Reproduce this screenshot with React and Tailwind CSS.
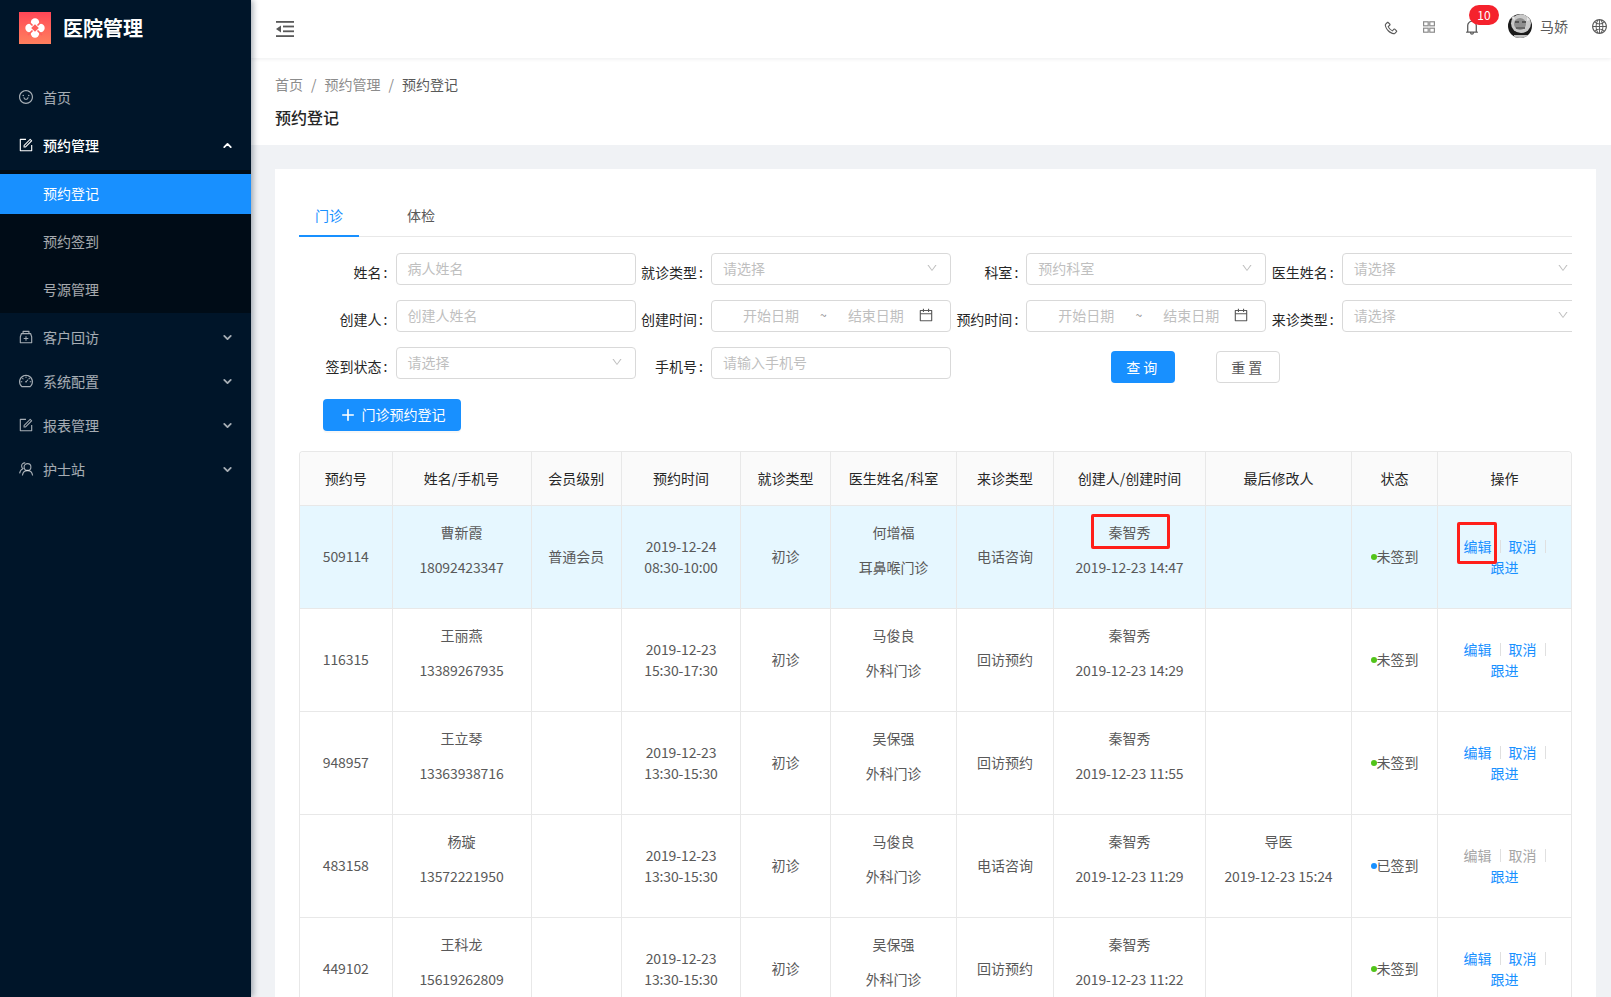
import React from "react";
import {
  AiOutlineSmile, AiOutlineForm, AiOutlineMedicineBox, AiOutlineDashboard,
  AiOutlinePhone, AiOutlineBell, AiOutlineGlobal, AiOutlineCalendar, AiOutlineDown,
} from "react-icons/ai";
import { ChevronDown, ChevronUp, Plus } from "lucide-react";

function Logo() {
  return (
    <div className="w-8 h-8 bg-gradient-to-b from-[#ff4557] to-[#ff7f5e] flex items-center justify-center shrink-0">
      <svg width="24" height="24" viewBox="0 0 24 24">
        <circle cx="12" cy="6.5" r="4.2" fill="#fff" />
        <circle cx="12" cy="17.5" r="4.2" fill="#fff" />
        <circle cx="6.5" cy="12" r="4.2" fill="#fff" />
        <circle cx="17.5" cy="12" r="4.2" fill="#fff" />
        <path d="M12 8.2 L15.8 12 L12 15.8 L8.2 12 Z" fill="#ff5f5b" />
        <path d="M5 5 L9.5 9.5 M19 5 L14.5 9.5 M5 19 L9.5 14.5 M19 19 L14.5 14.5" stroke="#ff5f5b" strokeWidth="1.6" />
      </svg>
    </div>
  );
}

const NurseIcon = ({ className }) => (
  <svg className={className} viewBox="0 0 16 16" fill="none" stroke="currentColor" strokeWidth="1.1">
    <circle cx="9.5" cy="6" r="3.4" />
    <path d="M4.4 14.5 C4.8 11.4 6.8 9.6 9.5 9.6 C12.2 9.6 14.2 11.4 14.6 14.5" />
    <path d="M7.2 1.9 C5.2 1.6 3.6 3 3.6 5 C3.6 6.2 4.1 7 4.9 7.7 C3 8.5 1.9 10.2 1.6 12.4" />
  </svg>
);

const MenuItem = ({ icon: Icon, label, open, active }) => (
  <div className={`h-11 flex items-center pl-[18px] pr-[17px] ${active ? "text-white" : "text-white/65"}`}>
    <Icon className="w-4 h-4 mr-[9px] shrink-0" />
    <span className={`text-[14px] flex-1 ${active ? "font-medium" : ""}`}>{label}</span>
    {open === true && <ChevronUp className="w-[13px] h-[13px] text-white" strokeWidth={3.4} />}
    {open === false && <ChevronDown className="w-[13px] h-[13px]" strokeWidth={3.4} />}
  </div>
);

function Sidebar() {
  return (
    <aside className="w-[251px] shrink-0 h-full bg-[#001529] shadow-[2px_0_6px_rgba(0,21,41,0.35)] z-10">
      <div className="h-[56px] flex items-center pl-[19px] gap-[12px]">
        <Logo />
        <span className="text-white text-[20px] font-bold">医院管理</span>
      </div>
      <div className="pt-[17px]">
        <div className="h-12 flex items-center"><div className="w-full"><MenuItem icon={AiOutlineSmile} label="首页" /></div></div>
        <div className="h-12 flex items-center"><div className="w-full"><MenuItem icon={AiOutlineForm} label="预约管理" open={true} active /></div></div>
        <div className="bg-[#000c17] pt-1 h-[143px] mt-px">
          <div className="h-10 bg-[#1890ff] text-white text-[14px] flex items-center pl-[43px] pb-[2px]">预约登记</div>
          <div className="h-12 text-white/65 text-[14px] flex items-center pl-[43px] mt-1 pb-[2px]">预约签到</div>
          <div className="h-12 text-white/65 text-[14px] flex items-center pl-[43px] pb-[2px]">号源管理</div>
        </div>
        <div className="pt-[2px]">
          <MenuItem icon={AiOutlineMedicineBox} label="客户回访" open={false} />
          <MenuItem icon={AiOutlineDashboard} label="系统配置" open={false} />
          <MenuItem icon={AiOutlineForm} label="报表管理" open={false} />
          <MenuItem icon={NurseIcon} label="护士站" open={false} />
        </div>
      </div>
    </aside>
  );
}

function Avatar() {
  return (
    <svg className="w-6 h-6" viewBox="0 0 24 24">
      <defs>
        <clipPath id="av"><circle cx="12" cy="12" r="12" /></clipPath>
      </defs>
      <g clipPath="url(#av)">
        <rect width="24" height="24" fill="#1a1a1a" />
        <ellipse cx="13" cy="9.5" rx="10" ry="9.5" fill="#c9c9c9" />
        <ellipse cx="12" cy="10" rx="6" ry="6" fill="#8e8e8e" />
        <path d="M7 7 H11 V9 H7 Z M14 7 H18 V9 H14 Z" fill="#555" />
        <path d="M8 13 H17 V15 H8 Z" fill="#666" />
        <path d="M3 4 L6 2 L7 6 Z M19 3 L22 6 L19 7 Z" fill="#e6e6e6" />
        <rect x="6" y="21" width="13" height="3" fill="#bdbdbd" />
      </g>
    </svg>
  );
}

const FoldIcon = () => (
  <svg width="18" height="16" viewBox="0 0 18 16" fill="#595959">
    <rect x="0" y="0" width="18" height="1.8" />
    <rect x="7" y="4.6" width="11" height="1.8" />
    <rect x="7" y="9.4" width="11" height="1.8" />
    <rect x="0" y="14.2" width="18" height="1.8" />
    <path d="M5 4.5 V11.5 L0 8 Z" />
  </svg>
);

const GridIcon = () => (
  <svg width="12" height="12" viewBox="0 0 12 12" fill="none" stroke="#8c8c8c" strokeWidth="1.2">
    <rect x="0.6" y="0.8" width="4.6" height="4" />
    <rect x="6.8" y="0.8" width="4.6" height="4" />
    <rect x="0.6" y="7.2" width="4.6" height="4" />
    <rect x="6.8" y="7.2" width="4.6" height="4" />
  </svg>
);

function Header() {
  return (
    <header className="h-[58px] shrink-0 bg-white shadow-[0_1px_4px_rgba(0,21,41,0.08)] flex items-center relative z-[5] pl-[25px]">
      <FoldIcon />
      <div className="ml-auto flex items-center text-[#595959] mt-[-6px]">
        <AiOutlinePhone className="w-[16px] h-[16px] mt-[4px] -scale-x-100" />
        <span className="ml-[24px] mt-[2px] flex"><GridIcon /></span>
        <div className="relative ml-[28px] mt-[2px]">
          <AiOutlineBell className="w-[18px] h-[18px]" />
          <span className="absolute left-[6px] top-[-13px] w-[30px] h-5 rounded-full bg-[#f5222d] text-white text-[12px] flex items-center justify-center">10</span>
        </div>
        <div className="ml-[27px] flex"><Avatar /></div>
        <span className="ml-2 text-[14px]">马娇</span>
        <AiOutlineGlobal className="w-[17px] h-[17px] ml-[23px] mr-[3px] mt-[1px]" />
      </div>
    </header>
  );
}

const Label = ({ children }) => (
  <label className="w-[74px] shrink-0 pr-2 text-right text-[14px] text-[#262626] pt-[9px] leading-[21px] whitespace-nowrap">{children}<span className="ml-[2px]">:</span></label>
);

const Input = ({ ph }) => (
  <div className="w-60 h-8 shrink-0 border border-[#d9d9d9] rounded px-[11px] pb-[2px] flex items-center text-[14px] text-[#bfbfbf] bg-white">{ph}</div>
);

const Select = ({ ph }) => (
  <div className="w-60 h-8 shrink-0 border border-[#d9d9d9] rounded pl-[11px] pr-3 pb-[2px] flex items-center justify-between text-[14px] text-[#bfbfbf] bg-white">
    {ph}
    <AiOutlineDown className="w-3 h-3 text-[#bfbfbf]" />
  </div>
);

const DateRange = () => (
  <div className="w-60 h-8 shrink-0 border border-[#d9d9d9] rounded flex items-center text-[14px] text-[#bfbfbf] bg-white pl-[31px] pr-[16px] pb-[2px]">
    <span>开始日期</span>
    <span className="mx-auto text-[#8c8c8c] text-[12px]">~</span>
    <span>结束日期</span>
    <AiOutlineCalendar className="w-4 h-4 ml-[14px] text-[#595959]" />
  </div>
);

const Field = ({ label, children }) => (
  <div className="flex w-[315.4px] shrink-0">
    <Label>{label}</Label>
    {children}
  </div>
);

function Form() {
  return (
    <div className="overflow-hidden pl-[22.5px] pt-[16px]">
      <div className="flex flex-col gap-[15px] w-[1300px]">
        <div className="flex">
          <Field label="姓名"><Input ph="病人姓名" /></Field>
          <Field label="就诊类型"><Select ph="请选择" /></Field>
          <Field label="科室"><Select ph="预约科室" /></Field>
          <Field label="医生姓名"><Select ph="请选择" /></Field>
        </div>
        <div className="flex">
          <Field label="创建人"><Input ph="创建人姓名" /></Field>
          <Field label="创建时间"><DateRange /></Field>
          <Field label="预约时间"><DateRange /></Field>
          <Field label="来诊类型"><Select ph="请选择" /></Field>
        </div>
        <div className="flex">
          <Field label="签到状态"><Select ph="请选择" /></Field>
          <Field label="手机号"><Input ph="请输入手机号" /></Field>
          <div className="flex pl-[159px] pt-[4px]">
            <button className="w-16 h-8 rounded bg-[#1890ff] text-white text-[14px] tracking-[3px] shadow-[0_2px_0_rgba(0,0,0,0.03)]">查询</button>
            <button className="w-16 h-8 ml-[41px] rounded border border-[#d9d9d9] bg-white text-[#595959] text-[14px] tracking-[3px]">重置</button>
          </div>
        </div>
      </div>
    </div>
  );
}

const cols = ["w-[92.5px]", "w-[139px]", "w-[90.5px]", "w-[119px]", "w-[90px]", "w-[126px]", "w-[97px]", "w-[152px]", "w-[146px]", "w-[86px]", "w-[133px]"];
const heads = ["预约号", "姓名/手机号", "会员级别", "预约时间", "就诊类型", "医生姓名/科室", "来诊类型", "创建人/创建时间", "最后修改人", "状态", "操作"];

const rows = [
  { id: "509114", name: "曹新霞", phone: "18092423347", level: "普通会员", d: "2019-12-24", t: "08:30-10:00", type: "初诊", doc: "何增福", dept: "耳鼻喉门诊", src: "电话咨询", by: "秦智秀", at: "2019-12-23 14:47", selected: true },
  { id: "116315", name: "王丽燕", phone: "13389267935", level: "", d: "2019-12-23", t: "15:30-17:30", type: "初诊", doc: "马俊良", dept: "外科门诊", src: "回访预约", by: "秦智秀", at: "2019-12-23 14:29" },
  { id: "948957", name: "王立琴", phone: "13363938716", level: "", d: "2019-12-23", t: "13:30-15:30", type: "初诊", doc: "吴保强", dept: "外科门诊", src: "回访预约", by: "秦智秀", at: "2019-12-23 11:55" },
  { id: "483158", name: "杨璇", phone: "13572221950", level: "", d: "2019-12-23", t: "13:30-15:30", type: "初诊", doc: "马俊良", dept: "外科门诊", src: "电话咨询", by: "秦智秀", at: "2019-12-23 11:29", mod: "导医", modAt: "2019-12-23 15:24", signed: true },
  { id: "449102", name: "王科龙", phone: "15619262809", level: "", d: "2019-12-23", t: "13:30-15:30", type: "初诊", doc: "吴保强", dept: "外科门诊", src: "回访预约", by: "秦智秀", at: "2019-12-23 11:22" },
];

const Cell = ({ i, last, children, className = "" }) => (
  <div className={`${cols[i]} shrink-0 relative flex flex-col items-center justify-center text-center ${last ? "" : "border-r border-[#e8e8e8]"} ${className}`}>
    {children}
  </div>
);

const Pair = ({ a, b }) => (
  <div className="leading-[21px]">
    <div className="mb-[14px]">{a}</div>
    <div className="mb-[14px] tracking-[-0.12px]">{b}</div>
  </div>
);

const Sep = ({ className = "" }) => <span className={`w-px h-[13px] bg-[#e0e0e0] ${className}`} />;

function Row({ r }) {
  return (
    <div className={`flex h-[103px] border-b border-[#e8e8e8] text-[14px] text-[#595959] ${r.selected ? "bg-[#e6f7ff]" : "bg-white"}`}>
      <Cell i={0} className="pb-[2px] tracking-[-0.12px]">{r.id}</Cell>
      <Cell i={1}><Pair a={r.name} b={r.phone} /></Cell>
      <Cell i={2} className="pb-[2px]">{r.level}</Cell>
      <Cell i={3}><div className="leading-[21px] tracking-[-0.12px]"><div>{r.d}</div><div>{r.t}</div></div></Cell>
      <Cell i={4} className="pb-[2px]">{r.type}</Cell>
      <Cell i={5}><Pair a={r.doc} b={r.dept} /></Cell>
      <Cell i={6} className="pb-[2px]">{r.src}</Cell>
      <Cell i={7}>
        <Pair a={r.by} b={r.at} />
        {r.selected && <span className="absolute left-[37px] top-[8px] w-[79px] h-[35px] border-[3px] border-[#ff1f1a] rounded-[2px]" />}
      </Cell>
      <Cell i={8}>{r.mod && <Pair a={r.mod} b={r.modAt} />}</Cell>
      <Cell i={9} className="pb-[2px]">
        <div className="flex items-center">
          <span className={`w-[6px] h-[6px] rounded-full mt-[2px] ${r.signed ? "bg-[#1890ff]" : "bg-[#52c41a]"}`} />
          <span>{r.signed ? "已签到" : "未签到"}</span>
        </div>
      </Cell>
      <Cell i={10} last>
        <div className="leading-[21px]">
          <div className="flex items-center justify-center">
            <span className={r.signed ? "text-[#a6a6a6]" : "text-[#1890ff]"}>编辑</span>
            <Sep className="mx-2" />
            <span className={r.signed ? "text-[#a6a6a6]" : "text-[#1890ff]"}>取消</span>
            <Sep className="ml-2" />
          </div>
          <div className="text-[#1890ff]">跟进</div>
        </div>
        {r.selected && <span className="absolute left-[19px] top-[16px] w-[40px] h-[42px] border-[3px] border-[#ff1f1a] rounded-[2px]" />}
      </Cell>
    </div>
  );
}

function Table() {
  return (
    <div className="mt-5 w-[1273px] border border-b-0 border-[#e8e8e8] rounded-t-[4px]">
      <div className="flex h-[54px] bg-[#fafafa] border-b border-[#e8e8e8] text-[14px] text-[#262626] rounded-t-[4px]">
        {heads.map((h, i) => (
          <Cell key={h} i={i} last={i === 10}>{h}</Cell>
        ))}
      </div>
      {rows.map((r) => <Row key={r.id} r={r} />)}
    </div>
  );
}

export default function App() {
  return (
    <div className="h-screen w-full overflow-hidden flex bg-[#f0f2f5] font-['Noto_Sans_CJK_SC','Liberation_Sans',sans-serif]">
      <Sidebar />
      <main className="flex-1 min-w-0 flex flex-col">
        <Header />
        <div className="h-[87px] shrink-0 bg-white pl-6 pt-[16px]">
          <div className="flex text-[14px] leading-[20px] text-[#8c8c8c]">
            <span>首页</span><span className="mx-2">/</span><span>预约管理</span><span className="mx-2">/</span><span className="text-[#595959]">预约登记</span>
          </div>
          <div className="mt-[11px] text-[16px] leading-[24px] font-medium text-[#262626]">预约登记</div>
        </div>
        <div className="flex-1 min-h-0 pl-6 pr-[15px] pt-6">
          <section className="bg-white h-[900px] px-6 pt-[24px]">
            <div className="border-b border-[#e8e8e8] h-[44px] flex items-end text-[14px]">
              <div className="w-[60px] h-[45px] -mb-px flex items-center justify-center pt-[3px] text-[#1890ff] border-b-2 border-[#1890ff]">门诊</div>
              <div className="ml-[48px] h-[45px] -mb-px flex items-center pt-[1px] text-[#595959]">体检</div>
            </div>
            <Form />
            <button className="mt-[16px] ml-6 w-[138px] h-8 rounded bg-[#1890ff] text-white text-[14px] pb-[2px] flex items-center justify-center gap-[5px] shadow-[0_2px_0_rgba(0,0,0,0.03)]">
              <Plus className="w-[18px] h-[18px] mt-[2px]" strokeWidth={2.2} />
              门诊预约登记
            </button>
            <Table />
          </section>
        </div>
      </main>
    </div>
  );
}
